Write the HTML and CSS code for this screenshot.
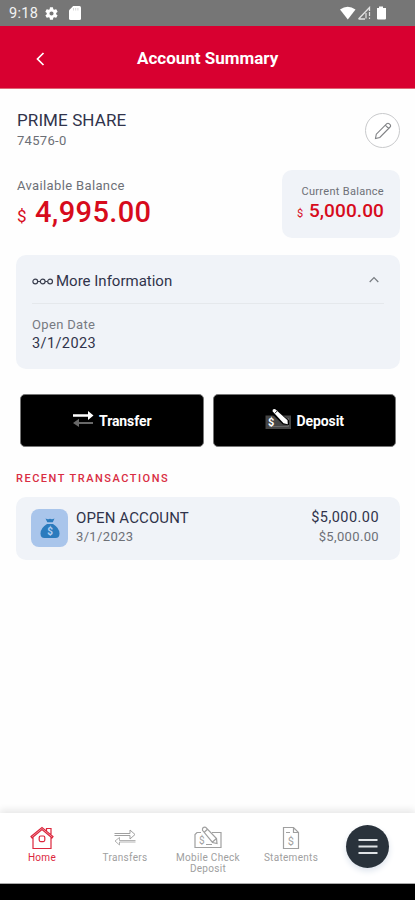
FILE: index.html
```html
<!DOCTYPE html>
<html lang="en">
<head>
<meta charset="utf-8">
<meta name="viewport" content="width=device-width, initial-scale=1">
<title>Account Summary</title>
<link rel="stylesheet" href="styles.css">
</head>
<body>
<div class="screen">
  <div class="status">
    <span class="time">9:18</span>
    <svg class="gear" width="15" height="15" viewBox="0 0 24 24" fill="#fff"><path d="M19.4 13c.04-.3.1-.7.1-1s-.03-.7-.1-1l2.1-1.600c.2-.2.2-.5.1-.7l-2-3.400c-.1-.2-.4-.3-.6-.2l-2.500 1a7 7 0 0 0-1.700-1L14.400 2.400a.5.5 0 0 0-.5-.4h-4a.5.5 0 0 0-.5.4L9.100 5.100a7 7 0 0 0-1.700 1l-2.500-1c-.2-.1-.5 0-.6.2l-2 3.400c-.1.2-.1.5.1.7L4.500 11a7 7 0 0 0 0 2l-2.100 1.600c-.2.200-.2.500-.1.700l2 3.400c.1.200.4.300.6.200l2.500-1a7 7 0 0 0 1.700 1l.3 2.700c0 .2.200.4.500.4h4c.3 0 .5-.2.500-.4l.4-2.700a7 7 0 0 0 1.700-1l2.500 1c.2.100.5 0 .6-.2l2-3.400c.1-.2.1-.5-.1-.7zM12 15.300a3.300 3.300 0 1 1 0-6.600 3.300 3.300 0 0 1 0 6.600z"/></svg>
    <svg class="card-icon" width="12" height="14" viewBox="0 0 12 14"><path d="M4.200 0H10.500Q12 0 12 1.500V12.500Q12 14 10.500 14H1.500Q0 14 0 12.500V4.200Z" fill="#fff"/><path d="M4.500 2v2.500M6.700 2v2.500M8.900 2v2.500" stroke="#ccc" stroke-width=".8"/></svg>
    <svg class="signals" width="47" height="15" viewBox="0 0 47 15"><path d="M0 3.500Q7.700-2.200 15.500 3.500L7.800 13.500Z" fill="#fff"/><path d="M18.500 13 29.500 1.500V5M18.500 13H25" fill="none" stroke="#e3e3e3" stroke-width="1.300"/><path d="M26 7V12.500M29.500 6V10M29.500 11.500V13" stroke="#e3e3e3" stroke-width="1.200"/><path d="M37 2H39V.5H43V2H46V12.500Q46 13.500 45 13.500H38Q37 13.500 37 12.500Z" fill="#fff"/></svg>
  </div>
  <header class="header">
    <svg class="back" width="9" height="14" viewBox="0 0 9 14"><path d="M7.500 1 1.500 7l6 6" fill="none" stroke="#fff" stroke-width="1.700"/></svg>
    <h1>Account Summary</h1>
  </header>
  <main>
    <section class="account">
      <div><div class="name">PRIME SHARE</div><div class="number">74576-0</div></div>
      <button class="edit" aria-label="Edit"><svg width="18" height="18" viewBox="0 0 18 18" fill="none" stroke="#808285" stroke-width="1.100"><path d="m1.500 16.500.8-4.300L12.800 1.700q1.300-1 2.500.2l.8.800q1 1.200 0 2.300L5.800 15.500zM11.300 3.200l3.300 3.300"/></svg></button>
    </section>
    <section class="balances">
      <div class="available"><div class="label">Available Balance</div><div class="amount"><span class="dollar">$</span><span class="value">4,995.00</span></div></div>
      <div class="current"><div class="label">Current Balance</div><div class="amount"><span class="dollar">$</span><span class="value">5,000.00</span></div></div>
    </section>
    <section class="info">
      <div class="info-head">
        <svg width="22" height="8" viewBox="0 0 22 8" fill="none" stroke="#3c4050" stroke-width="1.200"><circle cx="3.300" cy="4.500" r="2.400"/><circle cx="10.700" cy="4.500" r="2.400"/><circle cx="18.100" cy="4.500" r="2.400"/><path d="M5.700 4.500h2.600M13.100 4.500h2.600"/></svg>
        <span class="info-title">More Information</span>
        <svg class="up" width="10" height="7" viewBox="0 0 10 7"><path d="m.7 6 4.300-4.500L9.300 6" fill="none" stroke="#777b80" stroke-width="1.200"/></svg>
      </div>
      <div class="date-label">Open Date</div><div class="date">3/1/2023</div>
    </section>
    <section class="actions">
      <button><svg width="22" height="18" viewBox="0 0 22 18"><path d="M1 4.200H16V1L21.500 5.500 16 10V6.800H1Z" fill="#fff"/><path d="M21 11.900H7V8.800L1 12.900 7 17V13.900H21Z" fill="#686868"/></svg><span class="transfer">Transfer</span></button>
      <button><svg width="27" height="22" viewBox="0 0 27 22"><path d="M.5 7.500H26V21H.5Z" fill="#454545"/><path d="M4 18.500H23.500V10" fill="none" stroke="#666" stroke-width="1"/><path d="m5.500 4.500 4-3.500L24 12.200V17L18 16.500Z" fill="#000"/><path d="m7.500 3.300Q7.300.5 10.300 1.200L22.500 12.200l.3 4-4.300-1Z" fill="#fff"/><path d="m9.800 5.300 2.800-2.700" stroke="#333"/><text x="3" y="18" class="check-sign">$</text></svg><span class="deposit">Deposit</span></button>
    </section>
    <h2>RECENT TRANSACTIONS</h2>
    <section class="transaction">
      <div class="bag"><svg width="20" height="21" viewBox="0 0 20 21"><path d="M5.500.5Q8 1.800 10 .8q2 1 4.500-.3L12.800 4.300H7.300Z" fill="#2b7bbd"/><path d="M7 6h6q6.500 4 6.500 9.500 0 4.500-4 4.500H4.500Q.5 20 .5 15.500.5 10 7 6Z" fill="#2b7bbd"/><text x="10" y="17" class="bag-sign">$</text></svg></div>
      <div class="trans-main"><div class="trans-name">OPEN ACCOUNT</div><div class="trans-date">3/1/2023</div></div>
      <div class="trans-values"><div class="trans-amount">$5,000.00</div><div class="trans-balance">$5,000.00</div></div>
    </section>
  </main>
  <nav>
    <a class="item home"><svg width="24" height="24" viewBox="0 0 24 24" fill="none" stroke="currentColor" stroke-width="1.200"><path d="M1 10.500 12 1.500l11 9-1 1.300-10-8.200-10 8.200ZM3 11v11.500h18V11M16.500 5V2.500H21V9"/><rect x="9.200" y="10" width="5.600" height="5.600" rx="1.500"/></svg><span>Home</span></a>
    <a class="item transfers"><svg width="24" height="24" viewBox="0 0 24 24" fill="none" stroke="currentColor"><path d="M1.500 7.500h15.500V4L22 8.500 17 13V9.500H1.500"/><path d="M22.500 14.500H6.500v-3L2 15l4.500 4v-3h16" stroke-opacity=".8"/></svg><span>Transfers</span></a>
    <a class="item mobile"><svg width="28" height="24" viewBox="0 0 28 24" fill="none" stroke="currentColor" stroke-width="1.200"><path d="M7 6.500H3L1 8.500v13h26v-15h-9M12 18.500h6"/><path d="M8.500 4.300Q8 .7 11.700 1.300L22.500 12.500l.5 5-4.500-1ZM10.500 6l3-2.800M18.500 16l4-3.500"/><text x="5" y="18" class="nav-sign">$</text></svg><span>Mobile Check<br>Deposit</span></a>
    <a class="item statements"><svg width="18" height="24" viewBox="0 0 18 24" fill="none" stroke="currentColor" stroke-width="1.200"><path d="M1.500 1.500h10l5 5v16h-15zM11.500 1.500v5h5M4 6.500h4"/><text x="9" y="18.500" class="statement-sign">$</text></svg><span>Statements</span></a>
    <div class="menu-slot"><button class="menu" aria-label="Menu"><svg width="20" height="18" viewBox="0 0 20 18"><path d="M.5 2h19M.5 8.500h19M.5 15h19" stroke="#dfe3e6" stroke-width="2"/></svg></button></div>
  </nav>
  <div class="system"></div>
</div>
</body>
</html>
```
FILE: styles.css
```css
* { box-sizing: border-box; }
body { margin: 0; background: #fefefe; font-family: Roboto, sans-serif; color: #30334b; }
button { font: inherit; padding: 0; border: 0; }
svg { display: block; flex: none; }
.screen { width: 415px; height: 900px; display: flex; flex-direction: column; overflow: hidden; }
.status { height: 26px; flex: none; display: flex; align-items: center; background: #767676; padding: 0 28px 0 9px; }
.time { color: #f3f3f3; font-size: 14.500px; line-height: 26px; width: 35px; padding-top: 2px; letter-spacing: .3px; }
.gear { margin-top: 1px; }
.card-icon { margin-left: 10px; }
.signals { margin-left: auto; }
.header { height: 63px; flex: none; display: flex; align-items: center; background: #d80030; border-bottom: 1px solid #df6675; padding-left: 36px; color: #fff; }
.back { margin-top: 4px; }
h1 { margin: 2px 0 0 92px; font-size: 17px; font-weight: 700; line-height: 22px; white-space: nowrap; letter-spacing: 0; }
main { flex: 1; padding: 20px 15px 0 16px; }
.account { display: flex; justify-content: space-between; padding-left: 1px; height: 61px; }
.name { font-size: 17px; line-height: 22px; letter-spacing: .1px; }
.number { font-size: 13px; line-height: 20px; color: #6c6f76; letter-spacing: .3px; }
.edit { width: 35px; height: 35px; margin-top: 4px; border: 1px solid #c9cacc; border-radius: 50%; background: #fff; display: flex; align-items: center; justify-content: center; }
.balances { display: flex; justify-content: space-between; height: 68px; padding-left: 1px; }
.label { color: #6d7077; }
.available .label { font-size: 13px; line-height: 18px; margin-top: 7px; letter-spacing: .36px; }
.amount { display: flex; align-items: baseline; color: #d70b1c; }
.available .dollar { width: 18px; font-size: 17px; }
.available .value { font-size: 29px; line-height: 34px; font-weight: 500; letter-spacing: .38px; }
.current { width: 118px; border-radius: 10px; background: #f0f3f8; padding: 14px 16px 0 0; display: flex; flex-direction: column; align-items: flex-end; }
.current .label { font-size: 11px; line-height: 16px; letter-spacing: .3px; }
.current .dollar { font-size: 11px; width: 12px; }
.current .value { font-size: 19px; line-height: 22px; font-weight: 500; letter-spacing: .1px; }
.info { height: 114px; background: #f0f3f8; border-radius: 10px; margin-top: 17px; padding: 0 16px; }
.info-head { height: 49px; display: flex; align-items: center; padding-top: 4px; border-bottom: 1px solid #e5e8ec; }
.info-title { font-size: 15px; margin-left: 2px; letter-spacing: 0; }
.up { margin-left: auto; margin-right: 5px; margin-top: -4px; }
.date-label { font-size: 13px; line-height: 18px; margin-top: 12px; color: #777a82; letter-spacing: .33px; }
.date { font-size: 14.500px; line-height: 20px; letter-spacing: .4px; }
.actions { display: grid; grid-template-columns: 1fr 1fr; gap: 9px; padding: 0 4px; margin-top: 25px; height: 53px; }
.actions button { border-radius: 5px; background: #000; color: #fff; font-weight: 700; display: flex; align-items: center; justify-content: center; border: 1px solid #777; }
.actions svg { margin-top: -4px; }
.actions span { font-size: 14px; margin-left: 5px; letter-spacing: -.1px; }
.check-sign { font-size: 11px; font-weight: 700; fill: #fff; }
h2 { margin: 24px 0 0; color: #d92d43; font-size: 11px; line-height: 16px; font-weight: 500; letter-spacing: 1.500px; }
.transaction { height: 63px; margin-top: 10px; border-radius: 10px; background: #f0f3f8; display: flex; padding: 12px 21px 0 15px; }
.bag { width: 37px; height: 38px; border-radius: 8px; background: #a9c5eb; display: flex; align-items: center; justify-content: center; }
.bag-sign { font-size: 10px; font-weight: 700; fill: #b3cff1; text-anchor: middle; }
.trans-main { margin-left: 8px; margin-top: -1px; }
.trans-name { font-size: 15px; line-height: 20px; letter-spacing: .12px; }
.trans-date { font-size: 13px; line-height: 18px; color: #6d7077; letter-spacing: .35px; }
.trans-values { margin-left: auto; margin-top: -1px; text-align: right; }
.trans-amount { font-size: 14.500px; line-height: 20px; letter-spacing: .45px; }
.trans-balance { font-size: 13px; line-height: 18px; color: #6d7077; letter-spacing: .35px; }
nav { height: 71px; flex: none; background: #fff; display: grid; grid-template-columns: 83px 83px 83px 83px 1fr; border-bottom: 1px solid #aaa; box-shadow: 0 -3px 7px #e7e7e7; }
.item { color: #a0a0a0; display: flex; flex-direction: column; align-items: center; padding-top: 13px; padding-left: 1px; font-size: 10px; line-height: 11px; text-align: center; letter-spacing: .3px; }
.item span { margin-top: 2px; white-space: nowrap; }
.home { color: #dc273d; }
.nav-sign { font-size: 10px; fill: currentColor; stroke: none; }
.statement-sign { font-size: 11px; fill: currentColor; stroke: none; text-anchor: middle; }
.menu-slot { padding: 12px 0 0 14px; }
.menu { width: 43px; height: 43px; border-radius: 50%; background: #29323b; display: flex; align-items: center; justify-content: center; box-shadow: 0 3px 6px #dce3ec; }
.system { height: 16px; flex: none; background: #000; }
```
